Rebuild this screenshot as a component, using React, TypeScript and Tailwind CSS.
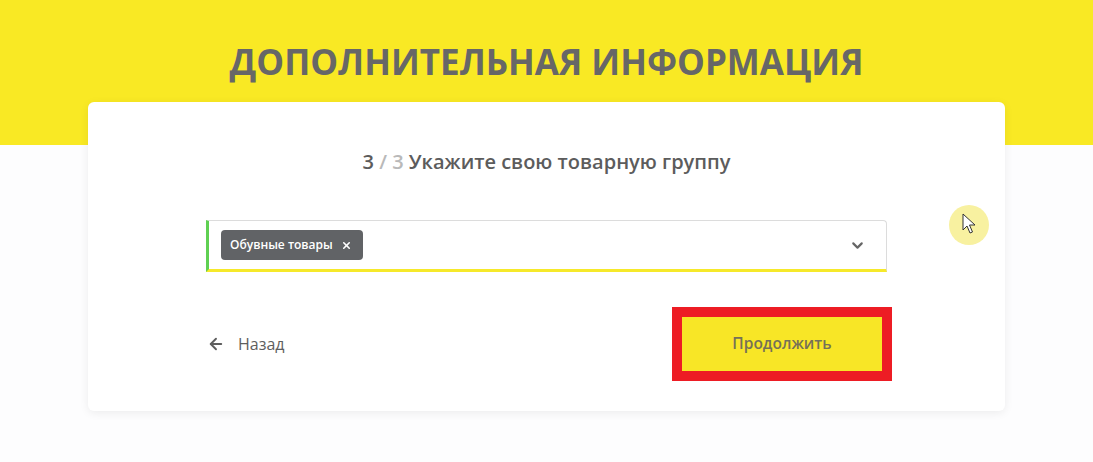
import { ArrowLeft, ChevronDown, X } from 'lucide-react';

const font = { fontFamily: '"Open Sans", "Noto Sans", sans-serif' };

export default function App() {
  return (
    <div className="relative w-[1093px] h-[462px] overflow-hidden bg-[#fdfdfe]" style={font}>
      {/* yellow header band */}
      <div className="h-[145px] bg-[#f9e924] flex justify-center pt-[38px]">
        <h1 className="text-[35px] leading-[48px] font-bold tracking-[0px] text-[#676767] uppercase">
          Дополнительная информация
        </h1>
      </div>

      <div className="mx-auto -mt-[43px] w-[917px] h-[309px] bg-white rounded-[6px] shadow-[0_2px_10px_rgba(0,0,0,0.07)] px-[118px] pt-[46px] flex flex-col">
        <div className="text-center text-[20px] leading-[28px] font-semibold text-[#5c5c5c]">
          3 <span className="text-[#b9b9b9]">/ 3</span> Укажите свою товарную группу
        </div>

        <div className="mt-[44px] h-[52px] flex items-center justify-between border border-[#dcdcdc] border-l-[3px] border-l-[#5fd052] border-b-[3px] border-b-[#f6e92a] rounded-tr-[4px] pl-[12px] pr-[20px]">
          <div className="h-[30px] flex items-center gap-[8px] bg-[#616366] rounded-[4px] pl-[9px] pr-[11px] text-white text-[12px] font-semibold">
            Обувные товары
            <X size={11} strokeWidth={3.5} />
          </div>
          <ChevronDown size={17} strokeWidth={3} className="text-[#666]" />
        </div>

        <div className="mt-[35px] flex items-center justify-between pr-[5px]">
          <div className="flex items-center gap-[13px] pl-[1px] text-[16px] text-[#5e5e5e] font-medium">
            <ArrowLeft size={18} strokeWidth={2.5} />
            Назад
          </div>
          <div className="border-[10px] border-[#ed1c24] -mr-[10px]">
            <button className="w-[200px] h-[54px] bg-[#f8e626] text-[15.5px] font-semibold text-[#757158]">
              Продолжить
            </button>
          </div>
        </div>
      </div>

      {/* cursor highlight */}
      <div className="absolute left-[949px] top-[205px] w-[40px] h-[40px] rounded-full bg-[#f8f1a0]">
        <svg className="absolute left-[13px] top-[8px]" width="14" height="22" viewBox="0 0 14 22">
          <path d="M1 1 L1 17 L5 13 L8 20 L10.5 19 L7.5 12 L13 12 Z" fill="#fff" stroke="#333" strokeWidth="1" strokeLinejoin="round" />
        </svg>
      </div>
    </div>
  );
}
